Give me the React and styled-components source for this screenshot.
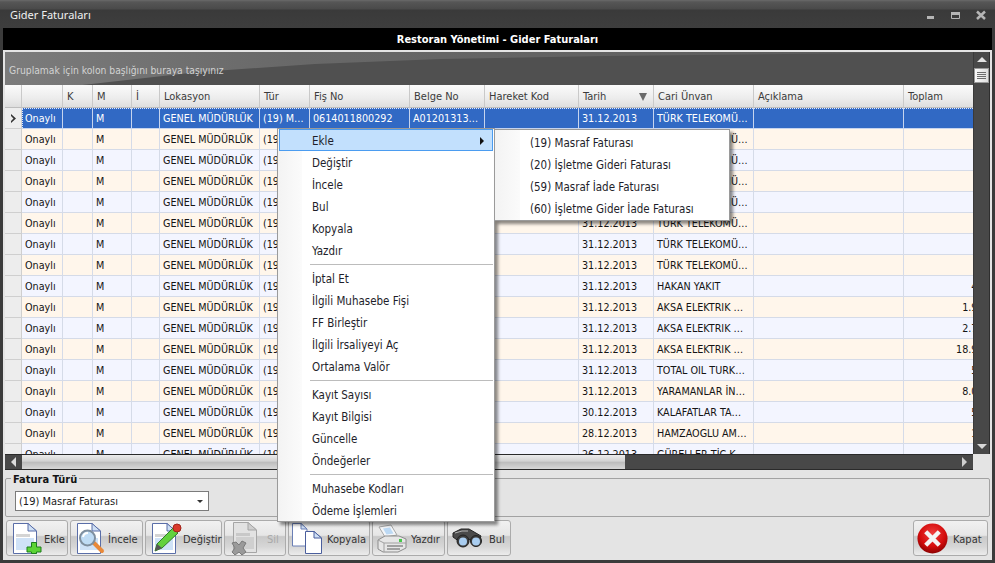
import React from "react";
import styled, { createGlobalStyle } from "styled-components";

const GlobalStyle = createGlobalStyle`
html, body {
  margin: 0;
  padding: 0;
  background: #3a3a3a;
}
* {
  box-sizing: border-box;
}
`;

const COLS = "17px 41px 30px 39px 28px 100px 50px 100px 75px 94px 75px 100px 150px 105px";

const Window = styled.div`
position: relative;
width: 995px;
height: 563px;
overflow: hidden;
display: flex;
flex-direction: column;
background: #3b3b3b;
font-family: "DejaVu Sans Condensed", "DejaVu Sans", sans-serif;
font-stretch: condensed;
font-size: 11px;
color: #1c1c1c;
`;

const TitleBar = styled.div`
height: 28px;
flex: none;
display: flex;
align-items: center;
justify-content: space-between;
padding: 0 6px 0 10px;
background: linear-gradient(#6a6a6a 0, #565656 2px, #4a4a4a 9px, #3a3a3a 10px, #3e3e3e 100%);
`;

const TitleText = styled.span`
font-family: "Noto Sans", sans-serif;
font-stretch: normal;
font-size: 11px;
color: #f0f0f0;
`;

const Frame = styled.div`
flex: 1;
margin: 0 3px 3px;
display: flex;
flex-direction: column;
background: #e4e4e4;
`;

const Caption = styled.div`
height: 22px;
flex: none;
display: flex;
align-items: center;
justify-content: center;
background: #000;
color: #fff;
font-size: 11px;
font-weight: bold;
`;

const GridWrap = styled.div`
flex: none;
display: grid;
grid-template-columns: 968px 17px;
grid-template-rows: 402px 16px;
margin: 2px 2px 0;
`;

const GridMain = styled.div`
display: flex;
flex-direction: column;
overflow: hidden;
background: #fff;
`;

const GroupPanel = styled.div`
position: relative;
height: 33px;
flex: none;
display: flex;
align-items: flex-end;
padding: 0 0 9px 4px;
overflow: hidden;
background: #505050;
color: #d2d2d2;
font-size: 10.25px;

&::before {
  content: "";
  position: absolute;
  inset: 0;
  background: linear-gradient(90deg, #7c7c7c, #686868 30%, #5a5a5a);
  clip-path: polygon(0 0, 100% 0, 62% 4px, 45% 7px, 32% 12px, 20% 20px, 8% 33px, 0 33px);
}
`;

const GroupText = styled.span`
position: relative;
`;

const HeaderRow = styled.div`
height: 23px;
flex: none;
display: grid;
grid-template-columns: ${COLS};
background: #e8e8e8;
`;

const HeaderCell = styled.div`
display: flex;
align-items: center;
justify-content: space-between;
padding: 1px 6px 0 4px;
background: linear-gradient(#fbfbfb, #ececec 60%, #dedede);
border-right: 1px solid #c9c9c9;
border-bottom: 1px solid #bdbdbd;
color: #3b3b3b;
white-space: nowrap;
overflow: hidden;
`;

const SortMark = styled.span`
width: 0;
height: 0;
border-left: 4px solid transparent;
border-right: 4px solid transparent;
border-top: 8px solid #6a6a6a;
`;

const Rows = styled.div`
flex: 1;
overflow: hidden;
`;

const Row = styled.div`
position: relative;
height: 21px;
display: grid;
grid-template-columns: ${COLS};
background: ${p => (p.$selected ? "#3169c4" : p.$odd ? "#fff6eb" : "#f3f5ff")};
color: ${p => (p.$selected ? "#fff" : "#141414")};

${p => p.$selected && `
  &::after {
    content: "";
    position: absolute;
    left: 17px;
    top: 0;
    width: 951px;
    height: 20px;
    border: 1px dotted #dfe8ff;
    pointer-events: none;
  }
`}
`;

const Cell = styled.div`
display: block;
padding: 0 ${p => (p.$right ? "3px" : "0")} 0 3px;
font-size: 10.7px;
line-height: 22px;
border-right: 1px solid ${p => (p.$selected ? "#c6d4ee" : "#d5dbe8")};
border-bottom: 1px solid ${p => (p.$selected ? "#c6d4ee" : "#d5dbe8")};
white-space: nowrap;
overflow: hidden;
text-align: ${p => (p.$right ? "right" : "left")};
`;

const Indicator = styled.div`
display: flex;
align-items: center;
justify-content: center;
background: #ededed;
border-right: 1px solid #cfcfcf;
border-bottom: 1px solid #cfcfcf;
`;

const VScroll = styled.div`
display: flex;
flex-direction: column;
align-items: center;
background: #484848;
border-left: 1px solid #3a3a3a;
border-right: 1px solid #2e2e2e;
padding-top: 5px;
`;

const ArrowUp = styled.span`
width: 0;
height: 0;
border-left: 5px solid transparent;
border-right: 5px solid transparent;
border-bottom: 5px solid #e2e2e2;
`;

const ArrowDown = styled.span`
width: 0;
height: 0;
margin-top: auto;
margin-bottom: 5px;
border-left: 5px solid transparent;
border-right: 5px solid transparent;
border-top: 5px solid #d8d8d8;
`;

const VThumb = styled.div`
width: 15px;
height: 15px;
margin-top: 6px;
display: flex;
flex-direction: column;
justify-content: center;
gap: 1px;
padding: 0 2px;
background: linear-gradient(90deg, #fafafa, #dedede);
border: 1px solid #9a9a9a;
`;

const GripLine = styled.span`
height: 1px;
background: #6d6d6d;
`;

const HScroll = styled.div`
display: flex;
align-items: stretch;
background: #484848;
border-top: 1px solid #2a2a2a;
border-bottom: 1px solid #2a2a2a;
`;

const HArrowLeft = styled.div`
width: 17px;
display: flex;
align-items: center;
justify-content: center;

&::before {
  content: "";
  border-top: 5px solid transparent;
  border-bottom: 5px solid transparent;
  border-right: 5px solid #dcdcdc;
}
`;

const HThumb = styled.div`
width: 603px;
background: linear-gradient(#ececec, #d2d2d2 45%, #bcbcbc 50%, #d8d8d8);
`;

const HArrowRight = styled.div`
width: 17px;
margin-left: auto;
display: flex;
align-items: center;
justify-content: center;

&::before {
  content: "";
  border-top: 5px solid transparent;
  border-bottom: 5px solid transparent;
  border-left: 5px solid #cfcfcf;
}
`;

const Corner = styled.div`
background: #e4e4e4;
`;

const FaturaGroup = styled.fieldset`
flex: none;
height: 46px;
margin: 1px 2px 0;
padding: 0 0 0 5px;
border: 1px solid #a2a2a2;
border-radius: 2px;
`;

const FaturaLegend = styled.legend`
padding: 2px 2px 0;
font-size: 11px;
font-weight: bold;
color: #141414;
line-height: 13px;
`;

const Combo = styled.div`
width: 194px;
height: 20px;
margin: 5px 0 0 4px;
display: flex;
align-items: center;
justify-content: space-between;
padding: 0 5px 0 3px;
background: #fff;
border: 1px solid #7b7b7b;
font-size: 11px;
`;

const ComboArrow = styled.span`
width: 0;
height: 0;
border-left: 3px solid transparent;
border-right: 3px solid transparent;
border-top: 3px solid #333;
`;

const Toolbar = styled.div`
flex: 1;
display: flex;
align-items: flex-start;
gap: 2px;
padding: 3px 4px 0 3px;
`;

const ToolButton = styled.div`
width: ${p => p.$w}px;
height: 36px;
flex: none;
display: flex;
align-items: center;
padding-left: ${p => p.$pad ?? 6}px;
margin-left: ${p => (p.$push ? "auto" : "0")};
border: 1px solid #ababab;
border-radius: 3px;
background: linear-gradient(#f1f1f1, #e6e6e6 42%, #c9c9c9 46%, #d6d6d6 75%, #ececec);
color: ${p => (p.$off ? "#a9a9a9" : "#333")};
font-size: 11px;
`;

const ToolIcon = styled.span`
width: ${p => p.$w ?? 31}px;
flex: none;
display: flex;
align-items: center;
`;

const ToolLabel = styled.span`
margin-left: ${p => p.$gap ?? 0}px;
padding-top: 2px;
white-space: nowrap;
`;

const Menu = styled.div`
position: absolute;
left: ${p => p.$x}px;
top: ${p => p.$y}px;
width: ${p => p.$w}px;
padding: ${p => p.$pad}px 1px;
display: flex;
flex-direction: column;
background: linear-gradient(90deg, #f3f3f3 0, #fbfbfb ${p => p.$gutter}px, #fff ${p => p.$gutter}px);
border: 1px solid #9a9a9a;
box-shadow: 3px 3px 3px rgba(0, 0, 0, 0.45);
`;

const MenuItem = styled.div`
height: 22px;
flex: none;
display: flex;
align-items: center;
justify-content: space-between;
padding: ${p => p.$top}px 9px 0 ${p => p.$indent}px;
font-size: 11.5px;
color: #1e1e2a;
${p => p.$active && `
  background: #c2e0fd;
  outline: 1px solid #4b9cf0;
  outline-offset: -1px;
`}
`;

const SubArrow = styled.span`
width: 0;
height: 0;
border-top: 4px solid transparent;
border-bottom: 4px solid transparent;
border-left: 4px solid #111;
`;

const MenuSep = styled.div`
height: 6px;
flex: none;
margin-left: 31px;
display: flex;
align-items: center;

&::before {
  content: "";
  flex: 1;
  height: 1px;
  background: #bcbcbc;
}
`;

function Page({ children }) {
  return (
    <svg width="30" height="31" viewBox="0 0 30 31">
      <path d="M.5.5H15L23.500 8V30.500H.5Z" fill="#fff" stroke="#5a6ea8" />
      <path d="M15 .5V8H23.500Z" fill="#cfe0f5" stroke="#5a6ea8" />
      <rect x="3" y="11" width="14" height="3" fill="#d4d4d4" />
      <rect x="3" y="15" width="18" height="12" fill="#cfe2f7" />
      {children}
    </svg>
  );
}

const IconAdd = () => (
  <Page>
    <path d="M18.500 19.500h5v4.500h4.500v5h-4.500v1.500h-5v-1.500H14v-5h4.500Z" fill="#5cd435" stroke="#1d7d1d" />
  </Page>
);

const IconFind = () => (
  <Page>
    <path d="M17 20L25 28" stroke="#e8893a" strokeWidth="4" strokeLinecap="round" />
    <circle cx="10.500" cy="15" r="7.500" fill="#bfdcf5" stroke="#7f8f9f" strokeWidth="2" />
    <path d="M6 14a5 5 0 0 1 5-4" stroke="#fff" strokeWidth="2" fill="none" />
  </Page>
);

const IconEdit = () => (
  <Page>
    <path d="M3 28L5 21 21 5 26 10 10 25Z" fill="#63d13e" stroke="#2f7d28" />
    <path d="M3 28L5 21 10 25Z" fill="#555" />
    <circle cx="25" cy="5" r="4" fill="#d93a2b" stroke="#a2231a" />
  </Page>
);

const IconDelete = () => (
  <svg width="30" height="33" viewBox="0 0 30 33">
    <g transform="translate(2 0)">
      <path d="M.5.5H15L23.500 8V30.500H.5Z" fill="#e2e2e2" stroke="#a5a5a5" />
      <path d="M15 .5V8H23.500Z" fill="#cfcfcf" stroke="#a5a5a5" />
      <rect x="3" y="11" width="14" height="3" fill="#c8c8c8" />
      <rect x="3" y="15" width="18" height="12" fill="#cfcfcf" />
    </g>
    <path d="M1 21l4-1 3 3 3-4 4 2-3 5 3 4-4 3-3-3-4 3-3-3 3-4Z" fill="#9a9a9a" stroke="#7a7a7a" />
  </svg>
);

const IconCopy = () => (
  <svg width="30" height="31" viewBox="0 0 30 31">
    <path d="M.5.5H9L15 6V23H.5Z" fill="#fff" stroke="#6a7fb5" />
    <path d="M9 .5V6H15Z" fill="#cfe0f5" stroke="#6a7fb5" />
    <path d="M13.500 8.500H22L29.500 15V30.500H13.500Z" fill="#fff" stroke="#4b5f9d" />
    <path d="M22 8.500V15H29.500Z" fill="#cfe0f5" stroke="#4b5f9d" />
  </svg>
);

const IconPrinter = () => (
  <svg width="30" height="29" viewBox="0 0 30 29">
    <path d="M2 3L14 1 20 11 8 13Z" fill="#f4f6f9" stroke="#a7a7a7" />
    <path d="M6 4.500l7-1 3.500 6-7 1Z" fill="#bcd9f4" />
    <path d="M1 16L8 12H22L29 15V24L21 28H6L1 25Z" fill="#e6e6e6" stroke="#8c8c8c" />
    <path d="M1 16L7 19H29M7 19V28" stroke="#a0a0a0" fill="none" />
    <path d="M10 22H26M10 25H23" stroke="#5a5a5a" />
    <rect x="22" y="15" width="3" height="3" fill="#47c84a" />
  </svg>
);

const IconBinoculars = () => (
  <svg width="30" height="20" viewBox="0 0 30 20">
    <path d="M1 5L9 1H17L29 8 27 14 15 11 8 14 1 9Z" fill="#4a4a4a" stroke="#222" />
    <path d="M3 5L10 3H16" stroke="#b5b5b5" fill="none" />
    <circle cx="11" cy="13" r="6" fill="#3d3d3d" stroke="#222" />
    <circle cx="11" cy="13.500" r="4" fill="#a9cdf0" />
    <circle cx="24" cy="13" r="5.500" fill="#3d3d3d" stroke="#222" />
    <circle cx="24" cy="13.500" r="4" fill="#a9cdf0" />
  </svg>
);

const IconClose = () => (
  <svg width="31" height="31" viewBox="0 0 32 32">
    <defs>
      <radialGradient id="kapatRed" cx="50%" cy="35%" r="70%">
        <stop offset="0" stopColor="#f04040" />
        <stop offset="0.6" stopColor="#d40c0c" />
        <stop offset="1" stopColor="#7c0000" />
      </radialGradient>
    </defs>
    <circle cx="16" cy="16" r="15.500" fill="url(#kapatRed)" />
    <path d="M9 9L23 23M23 9L9 23" stroke="#f4f4f4" strokeWidth="4.500" />
  </svg>
);

const COLUMNS = [
  "", "", "K", "M", "İ", "Lokasyon", "Tür", "Fiş No", "Belge No", "Hareket Kod", "Tarih", "Cari Ünvan", "Açıklama", "Toplam"
];

const TELEKOM = "TÜRK TELEKOMÜ…";
const AKSA = "AKSA ELEKTRIK …";

const ROWS = [
  { tarih: "31.12.2013", cari: TELEKOM, fis: "0614011800292", belge: "A01201313…", tur: "(19) M…" },
  { tarih: "31.12.2013", cari: TELEKOM },
  { tarih: "31.12.2013", cari: TELEKOM },
  { tarih: "31.12.2013", cari: TELEKOM },
  { tarih: "31.12.2013", cari: TELEKOM },
  { tarih: "31.12.2013", cari: TELEKOM },
  { tarih: "31.12.2013", cari: TELEKOM },
  { tarih: "31.12.2013", cari: TELEKOM },
  { tarih: "31.12.2013", cari: "HAKAN YAKIT", toplam: "458,20" },
  { tarih: "31.12.2013", cari: AKSA, toplam: "1.936,75" },
  { tarih: "31.12.2013", cari: AKSA, toplam: "2.718,40" },
  { tarih: "31.12.2013", cari: AKSA, toplam: "18.936,12" },
  { tarih: "31.12.2013", cari: "TOTAL OIL TURK…", toplam: "512,30" },
  { tarih: "31.12.2013", cari: "YARAMANLAR İN…", toplam: "8.040,00" },
  { tarih: "30.12.2013", cari: "KALAFATLAR TA…", toplam: "526,10" },
  { tarih: "28.12.2013", cari: "HAMZAOGLU AM…", toplam: "135,90" },
  { tarih: "26.12.2013", cari: "GÜRELLER TİC K…", toplam: "" }
];

const MAIN_MENU = [
  ["Ekle", "Değiştir", "İncele", "Bul", "Kopyala", "Yazdır"],
  ["İptal Et", "İlgili Muhasebe Fişi", "FF Birleştir", "İlgili İrsaliyeyi Aç", "Ortalama Valör"],
  ["Kayıt Sayısı", "Kayıt Bilgisi", "Güncelle", "Öndeğerler"],
  ["Muhasebe Kodları", "Ödeme İşlemleri"]
];

const SUB_MENU = [
  "(19) Masraf Faturası",
  "(20) İşletme Gideri Faturası",
  "(59) Masraf İade Faturası",
  "(60) İşletme Gider İade Faturası"
];

const TOOLS = [
  { label: "Ekle", w: 62, icon: <IconAdd /> },
  { label: "İncele", w: 73, icon: <IconFind /> },
  { label: "Değiştir", w: 77, icon: <IconEdit /> },
  { label: "Sil", w: 62, icon: <IconDelete />, off: true, gap: 5 },
  { label: "Kopyala", w: 82, icon: <IconCopy />, pad: 3, iconW: 35 },
  { label: "Yazdır", w: 73, icon: <IconPrinter />, pad: 4, iconW: 34 },
  { label: "Bul", w: 64, icon: <IconBinoculars />, pad: 4, iconW: 37 }
];

function DataRow({ row, index }) {
  const selected = index === 0;
  const odd = index % 2 === 1;
  const values = [
    "Onaylı", "", "M", "", "GENEL MÜDÜRLÜK",
    row.tur || "(19)", row.fis || "", row.belge || "", "",
    row.tarih, row.cari, ""
  ];
  return (
    <Row $selected={selected} $odd={odd}>
      <Indicator>
        {selected && (
          <svg width="7" height="9" viewBox="0 0 7 9">
            <path d="M1 0L6 4.500 1 9 1 7 3.500 4.500 1 2Z" fill="#333" />
          </svg>
        )}
      </Indicator>
      {values.map((v, i) => (
        <Cell key={i} $selected={selected}>{v}</Cell>
      ))}
      <Cell $selected={selected} $right>{row.toplam}</Cell>
    </Row>
  );
}

function App() {
  return (
    <Window>
      <GlobalStyle />
      <TitleBar>
        <TitleText>Gider Faturaları</TitleText>
        <svg width="62" height="12" viewBox="0 0 62 12">
          <rect x="0" y="8" width="7" height="3" fill="#b5b5b5" />
          <path d="M24.500 4.500h8v6h-8Z" fill="none" stroke="#b5b5b5" />
          <rect x="24" y="4" width="9" height="3" fill="#b5b5b5" />
          <path d="M50 3.500L58 11M58 3.500L50 11" stroke="#b5b5b5" strokeWidth="2.500" />
        </svg>
      </TitleBar>
      <Frame>
        <Caption>Restoran Yönetimi - Gider Faturaları</Caption>
        <GridWrap>
          <GridMain>
            <GroupPanel>
              <GroupText>Gruplamak için kolon başlığını buraya taşıyınız</GroupText>
            </GroupPanel>
            <HeaderRow>
              {COLUMNS.map((c, i) => (
                <HeaderCell key={i}>
                  {c}
                  {c === "Tarih" && <SortMark />}
                </HeaderCell>
              ))}
            </HeaderRow>
            <Rows>
              {ROWS.map((r, i) => (
                <DataRow key={i} row={r} index={i} />
              ))}
            </Rows>
          </GridMain>
          <VScroll>
            <ArrowUp />
            <VThumb>
              <GripLine />
              <GripLine />
              <GripLine />
              <GripLine />
            </VThumb>
            <ArrowDown />
          </VScroll>
          <HScroll>
            <HArrowLeft />
            <HThumb />
            <HArrowRight />
          </HScroll>
          <Corner />
        </GridWrap>
        <FaturaGroup>
          <FaturaLegend>Fatura Türü</FaturaLegend>
          <Combo>
            (19) Masraf Faturası
            <ComboArrow />
          </Combo>
        </FaturaGroup>
        <Toolbar>
          {TOOLS.map(t => (
            <ToolButton key={t.label} $w={t.w} $off={t.off} $pad={t.pad}>
              <ToolIcon $w={t.iconW}>{t.icon}</ToolIcon>
              <ToolLabel $gap={t.gap}>{t.label}</ToolLabel>
            </ToolButton>
          ))}
          <ToolButton $w={75} $push $pad={3}>
            <ToolIcon $w={36}><IconClose /></ToolIcon>
            <ToolLabel>Kapat</ToolLabel>
          </ToolButton>
        </Toolbar>
      </Frame>
      <Menu $x={277} $y={128} $w={218} $pad={0} $gutter={24}>
        {MAIN_MENU.map((group, g) => (
          <React.Fragment key={g}>
            {g > 0 && <MenuSep />}
            {group.map(item => (
              <MenuItem key={item} $top={1} $indent={33} $active={item === "Ekle"}>
                {item}
                {item === "Ekle" && <SubArrow />}
              </MenuItem>
            ))}
          </React.Fragment>
        ))}
      </Menu>
      <Menu $x={494} $y={129} $w={236} $pad={1} $gutter={25}>
        {SUB_MENU.map(item => (
          <MenuItem key={item} $top={2} $indent={34}>{item}</MenuItem>
        ))}
      </Menu>
    </Window>
  );
}

export default App;
